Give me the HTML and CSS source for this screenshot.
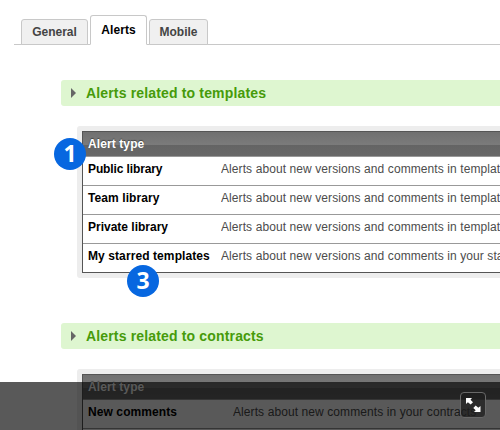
FILE: index.html
```html
<!DOCTYPE html>
<html lang="en">
<head>
<meta charset="utf-8">
<title>Alerts</title>
<link rel="stylesheet" href="styles.css">
</head>
<body>
<nav class="tabs">
  <span class="tab general">General</span>
  <span class="tab active">Alerts</span>
  <span class="tab mobile">Mobile</span>
</nav>
<main>
  <section>
    <h2><i class="arrow"></i><span>Alerts related to templates</span></h2>
    <div class="frame">
      <div class="table">
        <div class="head">Alert type</div>
        <div class="row"><b class="tight">Public library</b><span>Alerts about new versions and comments in templates</span></div>
        <div class="row"><b>Team library</b><span>Alerts about new versions and comments in templates</span></div>
        <div class="row"><b class="normal">Private library</b><span>Alerts about new versions and comments in templates</span></div>
        <div class="row"><b>My starred templates</b><span>Alerts about new versions and comments in your starred</span></div>
      </div>
      <span class="badge one">1</span>
      <span class="badge three">3</span>
    </div>
  </section>
  <section>
    <h2><i class="arrow"></i><span>Alerts related to contracts</span></h2>
    <div class="frame">
      <div class="table contracts">
        <div class="head">Alert type</div>
        <div class="row"><b>New comments</b><span>Alerts about new comments in your contracts</span></div>
        <div class="row"></div>
      </div>
    </div>
  </section>
</main>
<div class="overlay">
  <div class="expand">
    <svg width="24" height="24" viewBox="0 0 24 24" fill="#fff">
      <path d="M5 5h6L9.500 6.700 12 9.200 9.700 11.500 6.900 9.300 5 11zM19.500 19h-6.500l1.700-1.700L12.300 15 14.700 12.500l2.600 2.200 2.200-1.700z"/>
    </svg>
  </div>
</div>
</body>
</html>
```
FILE: styles.css
```css
* { box-sizing: border-box; }
html, body { height: 430px; overflow: hidden; }
body {
  margin: 0;
  position: relative;
  background: #fff;
  font: 12px/14px "Liberation Sans", Arial, sans-serif;
  color: #4c4c4c;
}
.tabs {
  display: flex;
  align-items: flex-end;
  gap: 2px;
  height: 45px;
  margin-left: 14px;
  padding-left: 7px;
  border-bottom: 1px solid #c8c8c8;
}
.tab {
  height: 26px;
  margin-bottom: -1px;
  padding-top: 5px;
  border: 1px solid #c8c8c8;
  border-radius: 3px 3px 0 0;
  background: #f0f0f0;
  color: #444;
  font-weight: bold;
  text-align: center;
}
.general { width: 67px; }
.mobile { width: 59px; }
.active {
  width: 57px;
  height: 30px;
  padding-top: 7px;
  border-bottom-color: #fff;
  background: #fff;
  color: #000;
  letter-spacing: .1px;
}
main { height: 385px; padding: 35px 0 0 61px; overflow: hidden; }
section { margin-bottom: 45px; }
h2 {
  display: flex;
  align-items: center;
  height: 26px;
  margin: 0 0 20px;
  padding-left: 10px;
  border-radius: 3px 0 0 3px;
  background: #def6d0;
  color: #469b0a;
  font-size: 14px;
  letter-spacing: .16px;
  white-space: nowrap;
}
.arrow {
  width: 5px;
  height: 10px;
  margin-right: 10px;
  background: #666;
  clip-path: polygon(0 0, 100% 50%, 0 100%);
}
.frame {
  position: relative;
  margin-left: 16px;
  padding: 5px 0 5px 5px;
  border-radius: 3px 0 0 3px;
  background: #ededed;
}
.table {
  border: 1px solid #555;
  border-right: 0;
  background: #fff;
}
.head {
  height: 24px;
  padding: 5px;
  background: linear-gradient(#707070, #7b7b7b 13px, #646464 13px, #686868);
  color: #fff;
  font-weight: bold;
  letter-spacing: .1px;
  text-shadow: 0 -1px 1px #444;
}
.row {
  display: grid;
  grid-template-columns: 133px minmax(0, 1fr);
  height: 29px;
  padding: 5px 0 5px 5px;
  border-top: 1px solid #999;
  letter-spacing: .09px;
  white-space: nowrap;
}
.row span { overflow: hidden; }
.contracts .row { grid-template-columns: 145px minmax(0, 1fr); }
.row b { color: #000; }
.row .tight { letter-spacing: -.12px; }
.row .normal { letter-spacing: 0; }
.badge {
  position: absolute;
  width: 32px;
  height: 32px;
  border-radius: 50%;
  background: #0767e0;
  color: #fff;
  font: bold 23px/30px "Open Sans", sans-serif;
  text-align: center;
}
.one { left: -23px; top: 12px; }
.three { left: 50px; top: 139px; }
.overlay {
  position: absolute;
  left: 0;
  right: 0;
  bottom: 0;
  height: 48px;
  background: rgba(0, 0, 0, .65);
}
.expand {
  position: absolute;
  left: 460px;
  top: 10px;
  width: 26px;
  height: 26px;
  border: 1px solid #686868;
  border-radius: 4px;
  background: rgba(30, 30, 30, .75);
}
.expand svg { display: block; }
```
